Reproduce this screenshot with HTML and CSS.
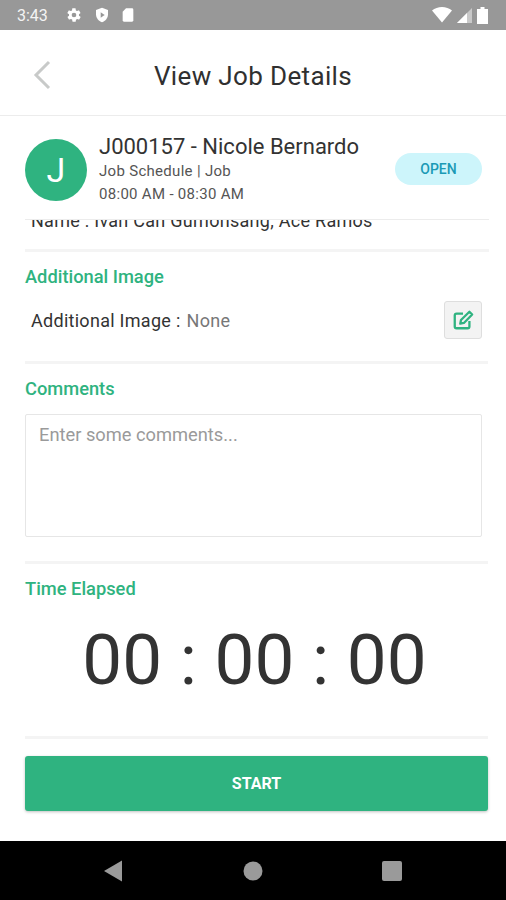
FILE: index.html
```html
<!DOCTYPE html>
<html lang="en">
<head>
    <meta charset="UTF-8">
    <meta name="viewport" content="width=device-width, initial-scale=1.0">
    <title>View Job Details</title>
    <link rel="stylesheet" href="styles.css">
</head>
<body>
    <div class="status-bar">
        <span class="clock">3:43</span>
        <svg class="status-icon" width="16" height="16" viewBox="0 0 24 24"><path d="M19.4 13c.1-.3.1-.7.1-1s0-.7-.1-1l2.100-1.600c.2-.2.2-.4.1-.6l-2-3.500c-.1-.2-.4-.3-.6-.2l-2.500 1c-.5-.4-1.100-.7-1.700-1l-.4-2.600c0-.3-.2-.5-.5-.5h-4c-.3 0-.5.2-.5.400l-.4 2.700c-.6.2-1.100.6-1.700 1l-2.500-1c-.2-.1-.5 0-.6.2l-2 3.500c-.1.2-.1.5.1.6L4.600 11c0 .3-.1.7-.1 1s0 .7.1 1l-2.100 1.600c-.2.2-.2.4-.1.6l2 3.500c.1.2.4.3.6.2l2.500-1c.5.4 1.100.7 1.700 1l.4 2.600c0 .3.2.5.5.5h4c.3 0 .5-.2.5-.4l.4-2.700c.6-.2 1.100-.6 1.700-1l2.500 1c.2.1.5 0 .6-.2l2-3.500c.1-.2.1-.5-.1-.6L19.400 13zM12 15.500a3.500 3.500 0 1 1 0-7 3.500 3.500 0 0 1 0 7z" fill="#fff"/></svg>
        <svg class="status-icon" width="16" height="16" viewBox="0 0 24 24"><path d="M12 1 3 4.500v6.500c0 5.500 3.800 10.400 9 12 5.200-1.600 9-6.500 9-12V4.500L12 1z" fill="#fff"/><path d="M10 8v8l6-4z" fill="#989898"/></svg>
        <svg class="status-icon" width="16" height="16" viewBox="0 0 24 24"><path d="M9 2h9a2 2 0 0 1 2 2v16a2 2 0 0 1-2 2H6a2 2 0 0 1-2-2V7z" fill="#fff"/></svg>
        <div class="status-right">
            <svg width="20" height="16" viewBox="0 0 20 16"><path d="M0 3.500C2.800 1.300 6.200 0 10 0s7.200 1.300 10 3.500L10 15.500z" fill="#fff"/></svg>
            <svg width="15" height="15" viewBox="0 0 15 15"><path d="M15 0v15H0z" fill="#c9c9c9"/><path d="M10 5v10H0z" fill="#fff"/></svg>
            <svg width="11" height="17" viewBox="0 0 11 17"><path d="M3.500 0h4v2H11v15H0V2h3.500z" fill="#fff"/></svg>
        </div>
    </div>

    <div class="page">
        <div class="header">
            <svg class="back" width="20" height="30" viewBox="0 0 20 30"><path d="M17 2 4 15l13 13" fill="none" stroke="#c8cac9" stroke-width="3"/></svg>
            <h1>View Job Details</h1>
        </div>

        <div class="job-card">
            <div class="avatar">J</div>
            <div class="job-info">
                <div class="job-title">J000157 - Nicole Bernardo</div>
                <div class="job-sub">Job Schedule | Job</div>
                <div class="job-sub">08:00 AM - 08:30 AM</div>
            </div>
            <div class="badge">OPEN</div>
        </div>

        <div class="scroll-area">
            <div class="scroll-inner">
                <div class="section section-name">
                    <div class="row-text">Name : Ivan Can Gumonsang, Ace Ramos</div>
                </div>

                <div class="section section-image">
                    <h2>Additional Image</h2>
                    <div class="image-row">
                        <div class="row-text">Additional Image :<span class="muted">None</span></div>
                        <button class="edit-btn">
                            <svg width="22" height="22" viewBox="0 0 24 24"><path d="M12 5H5a2 2 0 0 0-2 2v12a2 2 0 0 0 2 2h12a2 2 0 0 0 2-2v-6" fill="none" stroke="#2fb380" stroke-width="2.500"/><path d="M9 16l.8-4L19 3l3 3-9 9.200z" fill="none" stroke="#2fb380" stroke-width="2.500" stroke-linejoin="round"/></svg>
                        </button>
                    </div>
                </div>

                <div class="section section-comments">
                    <h2>Comments</h2>
                    <div class="comment-box">Enter some comments...</div>
                </div>

                <div class="section section-time">
                    <h2>Time Elapsed</h2>
                    <div class="timer">00 : 00 : 00</div>
                </div>

                <button class="start-btn">START</button>
            </div>
        </div>
    </div>

    <div class="nav-bar">
        <svg width="20" height="24" viewBox="0 0 20 24"><path d="M19 1.500v21L1 12z" fill="#9a9a9a"/></svg>
        <svg width="20" height="20" viewBox="0 0 20 20"><circle cx="10" cy="10" r="9.500" fill="#9a9a9a"/></svg>
        <svg width="20" height="20" viewBox="0 0 20 20"><rect width="20" height="20" rx="2" fill="#9a9a9a"/></svg>
    </div>
</body>
</html>
```

FILE: styles.css
```css
body {
    font-family: Roboto, "Liberation Sans", sans-serif;
    margin: 0;
    padding: 0;
    width: 506px;
    height: 900px;
    overflow: hidden;
    display: flex;
    flex-direction: column;
    background-color: #fff;
    color: #2e2e2e;
}

.status-bar {
    height: 30px;
    flex-shrink: 0;
    display: flex;
    align-items: center;
    padding: 0 18px 0 17px;
    background-color: #989898;
    color: #f4f4f4;
    box-sizing: border-box;
}

.clock {
    font-size: 16px;
    margin-right: 18px;
}

.status-icon {
    margin-right: 12px;
}

.status-icon:nth-of-type(2) {
    margin-right: 10px;
}

.status-right {
    margin-left: auto;
    display: flex;
    align-items: center;
    gap: 5px;
}

.page {
    flex: 1;
    display: flex;
    flex-direction: column;
    min-height: 0;
}

.header {
    height: 86px;
    flex-shrink: 0;
    padding-top: 6px;
    display: flex;
    align-items: center;
    justify-content: center;
    position: relative;
    border-bottom: 1px solid #ececec;
    box-sizing: border-box;
}

.back {
    position: absolute;
    left: 32px;
    top: 30px;
}

.header h1 {
    margin: 0;
    font-size: 26px;
    font-weight: 400;
    color: #303030;
    letter-spacing: 0.35px;
}

.job-card {
    height: 104px;
    flex-shrink: 0;
    margin: 0 17px 0 25px;
    padding-top: 4px;
    display: flex;
    align-items: center;
    gap: 12px;
    border-bottom: 1px solid #ececec;
    box-sizing: border-box;
}

.avatar {
    width: 62px;
    height: 62px;
    border-radius: 50%;
    flex-shrink: 0;
    display: flex;
    align-items: center;
    justify-content: center;
    background-color: #2fb380;
    color: #fff;
    font-size: 34px;
}

.job-title {
    font-size: 22px;
    line-height: 26px;
    color: #333;
}

.job-sub {
    font-size: 15px;
    line-height: 23px;
    color: #555;
    letter-spacing: 0.3px;
}

.job-info {
    flex: 1;
    margin-top: 1px;
}

.badge {
    width: 87px;
    height: 32px;
    margin: -2px 7px 0 0;
    border-radius: 16px;
    display: flex;
    align-items: center;
    justify-content: center;
    background-color: #cdf5fb;
    color: #1b9ab5;
    font-size: 14px;
    font-weight: 500;
}

.scroll-area {
    flex: 1;
    min-height: 0;
    overflow: hidden;
}

.scroll-inner {
    margin-top: -11px;
    padding: 0 18px 0 25px;
}

.section {
    border-bottom: 3px solid #f4f4f4;
}

.section-name {
    height: 43px;
    box-sizing: border-box;
    margin-right: -1px;
}

.section-image {
    height: 112px;
    padding-top: 14px;
    box-sizing: border-box;
}

.section-comments {
    height: 200px;
    padding-top: 14px;
    box-sizing: border-box;
}

.section-time {
    height: 175px;
    padding-top: 14px;
    box-sizing: border-box;
}

.section h2 {
    margin: 0 0 -2px;
    font-size: 18.3px;
    line-height: 22px;
    font-weight: 500;
    color: #2fb380;
}

.row-text {
    padding-left: 6px;
    font-size: 18px;
    line-height: 24px;
    color: #333;
    letter-spacing: 0.28px;
}

.image-row .row-text {
    padding-top: 2px;
}

.muted {
    color: #777;
    margin-left: 6px;
}

.image-row {
    display: flex;
    align-items: center;
    justify-content: space-between;
    margin-top: 15px;
    padding-right: 6px;
}

.edit-btn {
    width: 38px;
    height: 38px;
    padding: 0;
    display: flex;
    align-items: center;
    justify-content: center;
    background-color: #f3f3f3;
    border: 1px solid #dedede;
    border-radius: 3px;
}

.comment-box {
    height: 123px;
    margin: 16px 6px 0 0;
    padding: 10px 13px;
    box-sizing: border-box;
    border: 1px solid #e6e6e6;
    border-radius: 2px;
    font-size: 18.3px;
    line-height: 20px;
    color: #9a9a9a;
}

.timer {
    margin-top: 20px;
    text-align: center;
    font-size: 71px;
    line-height: 84px;
    color: #333;
    padding-right: 4px;
}

.start-btn {
    display: block;
    width: 100%;
    height: 55px;
    margin-top: 17px;
    border: none;
    border-radius: 3px;
    background-color: #2fb380;
    box-shadow: 0 1px 3px rgba(0, 0, 0, 0.25);
    color: #fff;
    font-family: inherit;
    font-size: 16px;
    font-weight: 700;
}

.nav-bar {
    height: 59px;
    flex-shrink: 0;
    display: flex;
    align-items: center;
    padding: 1px 104px 0 103px;
    justify-content: space-between;
    box-sizing: border-box;
    background-color: #000;
}
```
